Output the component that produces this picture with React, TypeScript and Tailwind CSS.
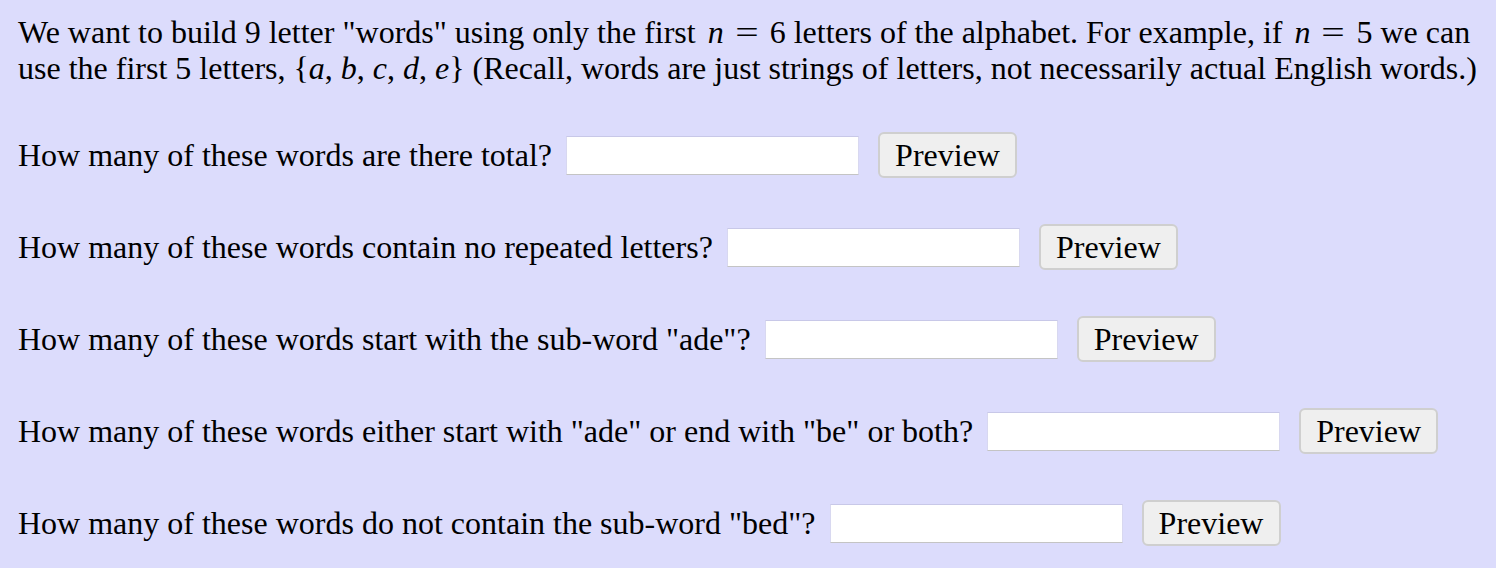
import React from "react";

const questions = [
  'How many of these words are there total?',
  'How many of these words contain no repeated letters?',
  'How many of these words start with the sub-word "ade"?',
  'How many of these words either start with "ade" or end with "be" or both?',
  'How many of these words do not contain the sub-word "bed"?',
];

function N() {
  return <span className="ml-[4px] italic">n</span>;
}

function Eq() {
  return (
    <span className="mx-[14px] inline-block scale-x-[1.3]">=</span>
  );
}

export default function App() {
  return (
    <div
      className="min-h-[568px] w-[1496px] bg-[#dcdcfc] pl-[18px] pr-[18px] pt-[14px] text-[32px] leading-[36px] text-black"
      style={{ fontFamily: '"Liberation Serif", "Times New Roman", serif' }}
    >
      <p>
        We want to build 9 letter "words" using only the first <N /><Eq />6 letters of the
        alphabet. For example, if <N /><Eq />5 we can use the first 5 letters,{" "}
        {"{"}
        <span className="italic">a</span>, <span className="italic">b</span>,{" "}
        <span className="italic">c</span>, <span className="italic">d</span>,{" "}
        <span className="italic">e</span>
        {"}"} (Recall, words are just strings of letters, not necessarily actual English
        words.)
      </p>
      <div className="mt-[46px] flex flex-col gap-[46px]">
        {questions.map((q) => (
          <div key={q} className="flex h-[46px] items-center">
            <span>{q}</span>
            <input
              type="text"
              className="ml-[14px] h-[39px] w-[293px] border border-t-[#c8c8e8] border-b-[#c4c4c4] border-x-[#d8d8f0] bg-white outline-none"
            />
            <button className="ml-[19px] h-[46px] w-[139px] rounded-[6px] border-2 border-[#cfcfcf] bg-[#efefef] text-[32px] leading-none">
              Preview
            </button>
          </div>
        ))}
      </div>
    </div>
  );
}
